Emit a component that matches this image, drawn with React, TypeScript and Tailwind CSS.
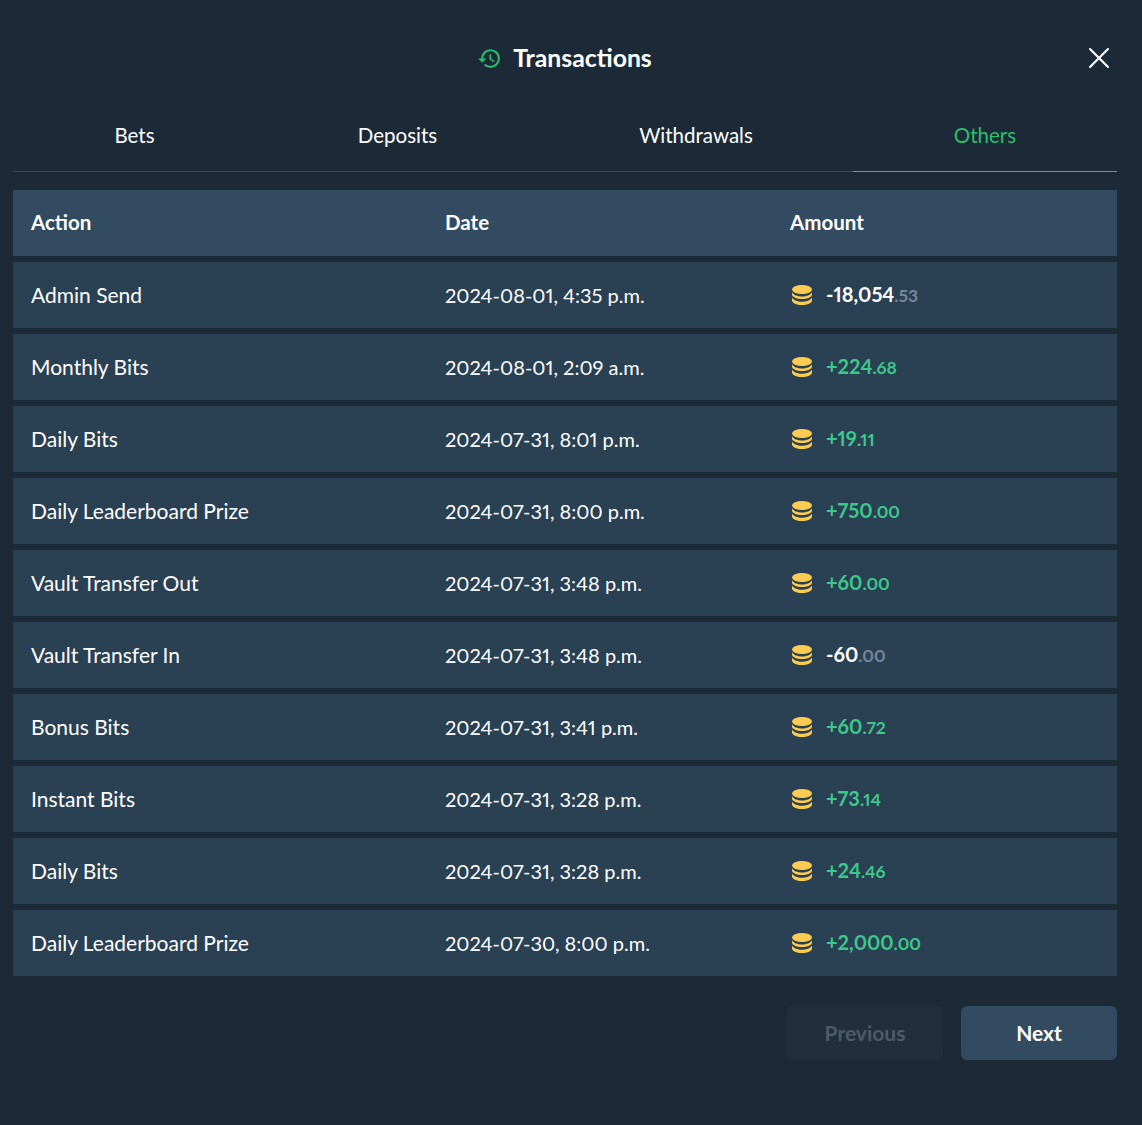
import { X } from 'lucide-react'
import { MdHistory } from 'react-icons/md'

type Row = { action: string; date: string; whole: string; cents: string; plus?: boolean }

const rows: Row[] = [
  { action: 'Admin Send', date: '2024-08-01, 4:35 p.m.', whole: '-18,054', cents: '.53' },
  { action: 'Monthly Bits', date: '2024-08-01, 2:09 a.m.', whole: '+224', cents: '.68', plus: true },
  { action: 'Daily Bits', date: '2024-07-31, 8:01 p.m.', whole: '+19', cents: '.11', plus: true },
  { action: 'Daily Leaderboard Prize', date: '2024-07-31, 8:00 p.m.', whole: '+750', cents: '.00', plus: true },
  { action: 'Vault Transfer Out', date: '2024-07-31, 3:48 p.m.', whole: '+60', cents: '.00', plus: true },
  { action: 'Vault Transfer In', date: '2024-07-31, 3:48 p.m.', whole: '-60', cents: '.00' },
  { action: 'Bonus Bits', date: '2024-07-31, 3:41 p.m.', whole: '+60', cents: '.72', plus: true },
  { action: 'Instant Bits', date: '2024-07-31, 3:28 p.m.', whole: '+73', cents: '.14', plus: true },
  { action: 'Daily Bits', date: '2024-07-31, 3:28 p.m.', whole: '+24', cents: '.46', plus: true },
  { action: 'Daily Leaderboard Prize', date: '2024-07-30, 8:00 p.m.', whole: '+2,000', cents: '.00', plus: true },
]

function Coins() {
  return (
    <svg width="20" height="20" viewBox="0 0 20 20" fill="#fdcb4f" className="shrink-0">
      <ellipse cx="10" cy="4.500" rx="10" ry="4.500" />
      <path d="M0 7.200C1.500 10 5.500 11.400 10 11.400s8.500-1.400 10-4.200v2.200c0 2.600-4.500 4.600-10 4.600S0 12 0 9.400z" />
      <path d="M0 12.600c1.500 2.800 5.500 4.200 10 4.200s8.500-1.400 10-4.200v2.800c0 2.600-4.500 4.600-10 4.600S0 18 0 15.400z" />
    </svg>
  )
}

export default function App() {
  return (
    <div className="min-h-[1125px] bg-[#1c2a38] text-white font-['Lato','Noto_Sans',sans-serif] text-[21px] proportional-nums">
      <div className="pl-[13px] pr-[25px]">
        <header className="relative h-[116px] flex items-center justify-center">
          <div className="flex items-center gap-[11px] pr-[1px]">
            <MdHistory className="text-[#2bbf6b] w-[25px] h-[25px]" />
            <span className="text-[24.800px] leading-none font-bold">Transactions</span>
          </div>
          <button className="absolute right-0 top-[40px] text-white" aria-label="Close">
            <X className="w-[36px] h-[36px]" strokeWidth={1.4} />
          </button>
        </header>

        <nav className="grid grid-cols-[243px_283px_314px_264px] h-[56px] text-center text-[20.500px]">
          <button className="border-b border-[#34495c] pb-[16px]">Bets</button>
          <button className="border-b border-[#34495c] pb-[16px]">Deposits</button>
          <button className="border-b border-[#34495c] pb-[16px]">Withdrawals</button>
          <button className="border-b border-[#2bbf6b] pb-[16px] text-[#2bbf6b]">Others</button>
        </nav>

        <div className="mt-[18px] flex flex-col gap-[6px]">
          <div className="grid grid-cols-[414px_345px_1fr] h-[66px] items-center px-[18px] bg-[#324b60] font-bold text-[20.500px]">
            <span className="-mt-[1px]">Action</span>
            <span className="-mt-[1px]">Date</span>
            <span className="-mt-[1px]">Amount</span>
          </div>
          {rows.map((r, i) => (
            <div key={i} className="grid grid-cols-[414px_345px_1fr] h-[66px] items-center px-[18px] bg-[#2a4053]">
              <span className="-mt-[1px]">{r.action}</span>
              <span className="-mt-[1px] text-[20px]">{r.date}</span>
              <span className="flex items-center gap-[14px] pl-[2px]">
                <Coins />
                <span className={`-mt-[1px] text-[20px] font-bold ${r.plus ? 'text-[#3cc88c]' : 'text-white'}`}>
                  {r.whole}
                  <span className={`text-[17.500px] ${r.plus ? '' : 'text-[#74879a]'}`}>{r.cents}</span>
                </span>
              </span>
            </div>
          ))}
        </div>

        <div className="mt-[30px] flex justify-end gap-[18px]">
          <button className="w-[156px] h-[54px] rounded-[6px] bg-[#212f3d] text-[#4d5b68] font-bold">Previous</button>
          <button className="w-[156px] h-[54px] rounded-[6px] bg-[#324b60] font-bold">Next</button>
        </div>
      </div>
    </div>
  )
}
